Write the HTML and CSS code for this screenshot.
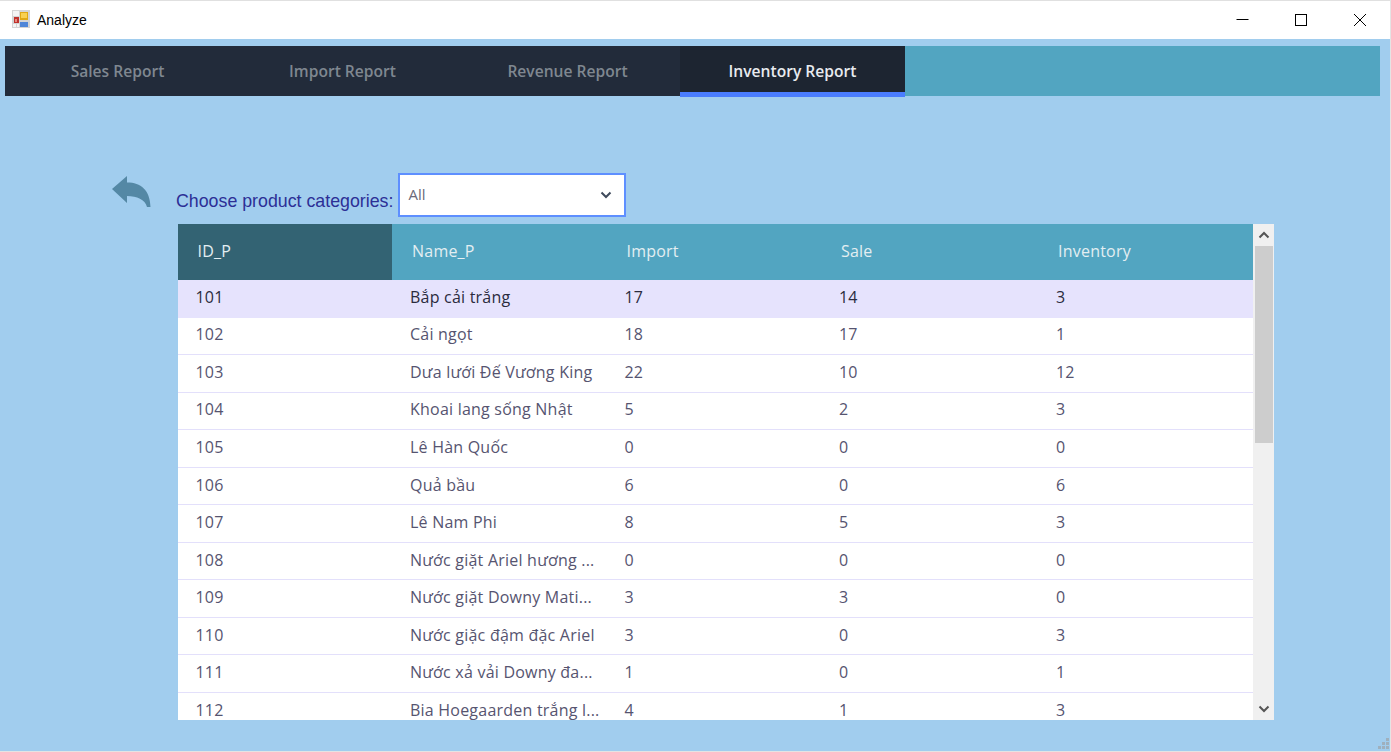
FILE: index.html
```html
<!DOCTYPE html>
<html>
<head>
    <title>Analyze</title>
    <link rel="stylesheet" href="styles.css">
</head>
<body>
    <div class="window">
        <div class="titlebar">
            <svg class="app-icon" width="18" height="18" viewBox="0 0 18 18">
                <rect width="18" height="18" fill="#d4d4d4"/>
                <rect x="1" y="1" width="6" height="5" fill="#f4f4f4"/>
                <rect x="8" y="2" width="8" height="8" fill="#e0a814"/>
                <rect x="9" y="3" width="6" height="5" fill="#f8d050"/>
                <rect x="2" y="7" width="5" height="6" fill="#c0312c"/>
                <rect x="3" y="9" width="2" height="3" fill="#e88a80"/>
                <rect x="8" y="12" width="8" height="5" fill="#4f86d8"/>
                <rect x="1" y="14" width="3" height="3" fill="#f4f4f4"/>
                <rect x="5" y="14" width="2" height="3" fill="#f4f4f4"/>
            </svg>
            <span class="app-title">Analyze</span>
            <div class="win-buttons">
                <svg width="14" height="14" viewBox="0 0 14 14"><path d="M1.5 6.5h12" stroke="#000" fill="none"/></svg>
                <svg width="14" height="14" viewBox="0 0 14 14"><rect x="1.5" y="1.5" width="11" height="11" stroke="#000" fill="none"/></svg>
                <svg width="14" height="14" viewBox="0 0 14 14"><path d="M1 1l12 12M13 1L1 13" stroke="#000" fill="none"/></svg>
            </div>
        </div>

        <div class="content">
            <div class="tabs">
                <div class="tab">Sales Report</div>
                <div class="tab">Import Report</div>
                <div class="tab">Revenue Report</div>
                <div class="tab active">Inventory Report</div>
            </div>

            <div class="filter">
                <svg class="back" width="40" height="33" viewBox="0 0 40 33">
                    <path d="M0 14L15 1v6.500C29 7.500 38 15 38.500 32H35C33 24.500 25 21 15 21v7z" fill="#5488a5"/>
                </svg>
                <span class="filter-label">Choose product categories:</span>
                <div class="select">
                    <span>All</span>
                    <svg width="12" height="8" viewBox="0 0 12 8"><path d="M1.5 1.5L6 6l4.5-4.5" stroke="#3f4a5c" stroke-width="2" fill="none"/></svg>
                </div>
            </div>

            <div class="grid-box">
                <div class="grid">
                    <div class="row head">
                        <div class="cell first">ID_P</div>
                        <div class="cell">Name_P</div>
                        <div class="cell">Import</div>
                        <div class="cell">Sale</div>
                        <div class="cell">Inventory</div>
                    </div>
                    <div class="row selected"><div class="cell">101</div><div class="cell">Bắp cải trắng</div><div class="cell">17</div><div class="cell">14</div><div class="cell">3</div></div>
                    <div class="row"><div class="cell">102</div><div class="cell">Cải ngọt</div><div class="cell">18</div><div class="cell">17</div><div class="cell">1</div></div>
                    <div class="row"><div class="cell">103</div><div class="cell">Dưa lưới Đế Vương King</div><div class="cell">22</div><div class="cell">10</div><div class="cell">12</div></div>
                    <div class="row"><div class="cell">104</div><div class="cell">Khoai lang sống Nhật</div><div class="cell">5</div><div class="cell">2</div><div class="cell">3</div></div>
                    <div class="row"><div class="cell">105</div><div class="cell">Lê Hàn Quốc</div><div class="cell">0</div><div class="cell">0</div><div class="cell">0</div></div>
                    <div class="row"><div class="cell">106</div><div class="cell">Quả bầu</div><div class="cell">6</div><div class="cell">0</div><div class="cell">6</div></div>
                    <div class="row"><div class="cell">107</div><div class="cell">Lê Nam Phi</div><div class="cell">8</div><div class="cell">5</div><div class="cell">3</div></div>
                    <div class="row"><div class="cell">108</div><div class="cell">Nước giặt Ariel hương ...</div><div class="cell">0</div><div class="cell">0</div><div class="cell">0</div></div>
                    <div class="row"><div class="cell">109</div><div class="cell">Nước giặt Downy Mati...</div><div class="cell">3</div><div class="cell">3</div><div class="cell">0</div></div>
                    <div class="row"><div class="cell">110</div><div class="cell">Nước giặc đậm đặc Ariel</div><div class="cell">3</div><div class="cell">0</div><div class="cell">3</div></div>
                    <div class="row"><div class="cell">111</div><div class="cell">Nước xả vải Downy đa...</div><div class="cell">1</div><div class="cell">0</div><div class="cell">1</div></div>
                    <div class="row"><div class="cell">112</div><div class="cell">Bia Hoegaarden trắng l...</div><div class="cell">4</div><div class="cell">1</div><div class="cell">3</div></div>
                </div>
                <div class="scrollbar">
                    <div class="scroll-btn">
                        <svg width="12" height="8" viewBox="0 0 12 8"><path d="M1.5 6.5L6 2l4.5 4.5" stroke="#555" stroke-width="2" fill="none"/></svg>
                    </div>
                    <div class="scroll-track"><div class="scroll-thumb"></div></div>
                    <div class="scroll-btn">
                        <svg width="12" height="8" viewBox="0 0 12 8"><path d="M1.5 1.5L6 6l4.5-4.5" stroke="#555" stroke-width="2" fill="none"/></svg>
                    </div>
                </div>
            </div>

            <svg class="grip" width="13" height="13" viewBox="0 0 13 13" fill="#9fb0bd">
                <rect x="9" y="1" width="3" height="3"/>
                <rect x="5" y="5" width="3" height="3"/>
                <rect x="9" y="5" width="3" height="3"/>
                <rect x="1" y="9" width="3" height="3"/>
                <rect x="5" y="9" width="3" height="3"/>
                <rect x="9" y="9" width="3" height="3"/>
            </svg>
        </div>
    </div>
</body>
</html>
```

FILE: styles.css
```css
html, body {
    margin: 0;
    height: 100%;
    overflow: hidden;
}
body {
    font-family: "Open Sans", "Noto Sans", sans-serif;
    background-color: #a1cdee;
}
.window {
    height: 752px;
    display: flex;
    flex-direction: column;
    border-right: 1px solid #e4e4e4;
    border-bottom: 1px solid #e4e4e4;
    box-sizing: border-box;
}

/* title bar */
.titlebar {
    height: 39px;
    flex: none;
    box-sizing: border-box;
    border-top: 1px solid #e0e0e0;
    background-color: #fff;
    display: flex;
    align-items: center;
    padding-left: 12px;
}
.app-icon {
    margin-bottom: 2px;
}
.app-title {
    font-family: "Liberation Sans", Arial, sans-serif;
    font-size: 14px;
    color: #000;
    margin-left: 7px;
}
.win-buttons {
    margin-left: auto;
    display: flex;
    gap: 45px;
    padding-right: 23px;
}

/* main area */
.content {
    flex: 1;
    position: relative;
    padding: 7px 10px 0 5px;
}
.tabs {
    height: 50px;
    background-color: #52a5c1;
    display: flex;
}
.tab {
    width: 225px;
    background-color: #222b3a;
    color: #7f8790;
    font-size: 15.6px;
    font-weight: 600;
    display: flex;
    align-items: center;
    justify-content: center;
    box-sizing: border-box;
    padding-bottom: 1px;
}
.tab.active {
    height: 51px;
    background-color: #1d2531;
    color: #e8ebef;
    border-bottom: 5px solid #4a7dff;
    padding-top: 3px;
    padding-bottom: 0;
}

.filter {
    height: 51px;
    margin-top: 77px;
    padding-left: 107px;
    display: flex;
}
.back {
    margin-top: 2px;
}
.filter-label {
    font-family: "Liberation Sans", Arial, sans-serif;
    font-size: 17.8px;
    color: #2c2f96;
    margin: 18px 5px 0 24px;
    white-space: nowrap;
}
.select {
    width: 228px;
    height: 44px;
    box-sizing: border-box;
    border: 2px solid #5e8fff;
    background-color: #fff;
    color: #6b6b7a;
    font-size: 15px;
    display: flex;
    align-items: center;
    justify-content: space-between;
    padding: 0 12px 0 8px;
}
.select span {
    margin-bottom: 3px;
}

/* table */
.grid-box {
    width: 1096.5px;
    height: 496px;
    margin: 0 0 0 172.5px;
    display: flex;
    background-color: #fff;
    overflow: hidden;
}
.grid {
    width: 1075.5px;
    flex: none;
}
.row {
    display: grid;
    grid-template-columns: 214.5px 214.5px 214.5px 217px 1fr;
    height: 37.55px;
    box-sizing: border-box;
    border-bottom: 1px solid #e3e0fb;
    color: #565470;
    font-size: 16px;
    letter-spacing: 0.22px;
}
.cell {
    display: flex;
    align-items: center;
    padding-left: 18px;
    padding-bottom: 3px;
    white-space: nowrap;
    overflow: hidden;
}
.row.head {
    height: 56px;
    background-color: #52a5c1;
    color: #e3eef2;
    border-bottom: none;
}
.row.head .cell {
    padding-left: 20px;
    padding-bottom: 2px;
}
.row.head .cell.first {
    background-color: #336373;
}
.row.selected {
    background-color: #e6e3fd;
    color: #2b2b3d;
    border-bottom: none;
}

/* fake scrollbar */
.scrollbar {
    flex: 1;
    background-color: #f0f0f0;
    display: flex;
    flex-direction: column;
}
.scroll-btn {
    height: 22px;
    flex: none;
    display: flex;
    align-items: center;
    justify-content: center;
}
.scroll-track {
    flex: 1;
}
.scroll-thumb {
    height: 197px;
    margin: 0 1px 0 2px;
    background-color: #cdcdcd;
}

.grip {
    position: absolute;
    right: 0;
    bottom: 1px;
}
```
